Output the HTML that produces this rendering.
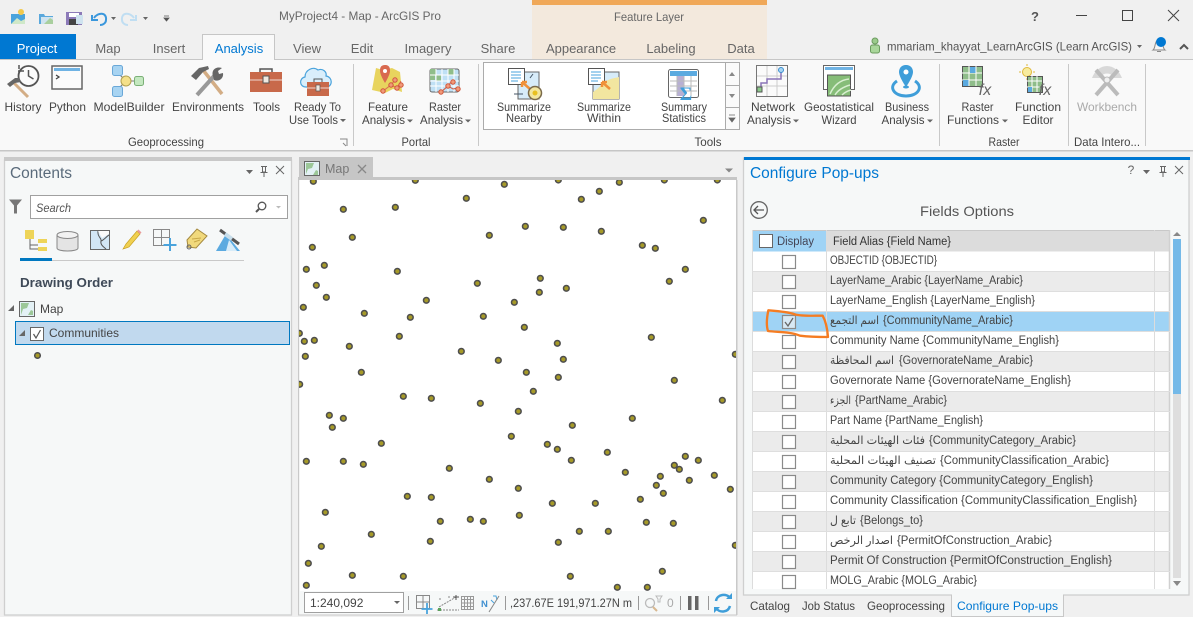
<!DOCTYPE html>
<html><head><meta charset="utf-8"><style>
html,body{margin:0;padding:0;background:#f0f0f0;width:1193px;height:617px;overflow:hidden}
svg{display:block;font-family:"Liberation Sans","DejaVu Sans",sans-serif}
</style></head><body>
<svg width="1193" height="617" viewBox="0 0 1193 617" xmlns="http://www.w3.org/2000/svg">
<defs><clipPath id="mc"><rect x="299" y="180" width="437" height="411"/></clipPath></defs>
<rect width="1193" height="617" fill="#f0f0f0"/>
<!-- contextual tab -->
<rect x="532" y="0" width="235" height="59" fill="#f3e9dd"/><rect x="532" y="0" width="235" height="5" fill="#f0a858"/>
<!-- ribbon -->
<rect x="0" y="59" width="1193" height="92" fill="#f9f9f9"/>
<rect x="0" y="59" width="1193" height="1" fill="#c6c6c6"/><rect x="0" y="150" width="1193" height="1.5" fill="#c6c6c6"/>
<rect x="0" y="34" width="76" height="25" fill="#0078d2"/>
<path d="M202.500 60V34.500H274.500V60" fill="#f9f9f9" stroke="#c6c6c6"/><rect x="203" y="58" width="71" height="3" fill="#f9f9f9"/>
<g fill="#c9c9c9"><rect x="353" y="64" width="1" height="82"/><rect x="478" y="64" width="1" height="82"/><rect x="939" y="64" width="1" height="82"/><rect x="1068" y="64" width="1" height="82"/><rect x="1145" y="64" width="1" height="82"/></g>
<!-- title -->
<g font-size="12" fill="#666">
<text x="279" y="20" textLength="162" lengthAdjust="spacingAndGlyphs">MyProject4 - Map - ArcGIS Pro</text>
<text x="614" y="21" textLength="70" lengthAdjust="spacingAndGlyphs">Feature Layer</text>
</g>
<g font-size="13" fill="#666" text-anchor="middle">
<text x="108" y="53">Map</text><text x="169" y="53">Insert</text><text x="307" y="53">View</text><text x="362" y="53">Edit</text><text x="428" y="53">Imagery</text><text x="498" y="53">Share</text><text x="581" y="53">Appearance</text><text x="671" y="53">Labeling</text><text x="741" y="53">Data</text>
<text x="37" y="53" fill="#fff">Project</text><text x="239" y="53" fill="#0078d2">Analysis</text>
</g>
<!-- ribbon labels -->
<g font-size="12" fill="#444" text-anchor="middle" lengthAdjust="spacingAndGlyphs">
<text x="23" y="111" textLength="37" lengthAdjust="spacingAndGlyphs">History</text><text x="67.500" y="111" textLength="37" lengthAdjust="spacingAndGlyphs">Python</text><text x="129" y="111" textLength="71" lengthAdjust="spacingAndGlyphs">ModelBuilder</text><text x="208" y="111" textLength="72" lengthAdjust="spacingAndGlyphs">Environments</text><text x="266.500" y="111" textLength="27" lengthAdjust="spacingAndGlyphs">Tools</text>
<text x="317.500" y="111" textLength="47" lengthAdjust="spacingAndGlyphs">Ready To</text><text x="313.500" y="124" textLength="49" lengthAdjust="spacingAndGlyphs">Use Tools</text>
<text x="388" y="111" textLength="40" lengthAdjust="spacingAndGlyphs">Feature</text><text x="383.500" y="124" textLength="43" lengthAdjust="spacingAndGlyphs">Analysis</text><text x="445" y="111" textLength="32" lengthAdjust="spacingAndGlyphs">Raster</text><text x="441.500" y="124" textLength="43" lengthAdjust="spacingAndGlyphs">Analysis</text>
<text x="773" y="111" textLength="44" lengthAdjust="spacingAndGlyphs">Network</text><text x="769" y="124" textLength="44" lengthAdjust="spacingAndGlyphs">Analysis</text><text x="839" y="111" textLength="70" lengthAdjust="spacingAndGlyphs">Geostatistical</text><text x="839" y="124" textLength="35" lengthAdjust="spacingAndGlyphs">Wizard</text><text x="907" y="111" textLength="44" lengthAdjust="spacingAndGlyphs">Business</text><text x="903" y="124" textLength="43" lengthAdjust="spacingAndGlyphs">Analysis</text>
<text x="977.500" y="111" textLength="32" lengthAdjust="spacingAndGlyphs">Raster</text><text x="973" y="124" textLength="52" lengthAdjust="spacingAndGlyphs">Functions</text><text x="1038" y="111" textLength="46" lengthAdjust="spacingAndGlyphs">Function</text><text x="1038" y="124" textLength="31" lengthAdjust="spacingAndGlyphs">Editor</text>
<text x="1107" y="111" fill="#aaa" textLength="60" lengthAdjust="spacingAndGlyphs">Workbench</text>
<text x="166" y="146" textLength="76" lengthAdjust="spacingAndGlyphs">Geoprocessing</text><text x="416" y="146" textLength="29" lengthAdjust="spacingAndGlyphs">Portal</text><text x="708" y="146" textLength="27" lengthAdjust="spacingAndGlyphs">Tools</text><text x="1004" y="146" textLength="31" lengthAdjust="spacingAndGlyphs">Raster</text><text x="1107" y="146" textLength="66" lengthAdjust="spacingAndGlyphs">Data Intero...</text>
</g>
<!-- gallery -->
<rect x="483.500" y="62.500" width="256" height="67" fill="#fff" stroke="#ababab"/>
<rect x="726" y="63" width="13" height="66" fill="#fafafa"/><path d="M725.500 62.500V129.500M725.500 85.500H739.500M725.500 107.500H739.500" stroke="#ababab" fill="none"/>
<path d="M729 76l3-4 3 4zM729 94l3 4 3-4z" fill="#888"/><path d="M729 115h6M729 118l3 4 3-4z" fill="#666" stroke="#666" stroke-width=".8"/>
<g font-size="12" fill="#444" text-anchor="middle">
<text x="524" y="111" textLength="54" lengthAdjust="spacingAndGlyphs">Summarize</text><text x="524" y="122" textLength="36" lengthAdjust="spacingAndGlyphs">Nearby</text><text x="604" y="111" textLength="54" lengthAdjust="spacingAndGlyphs">Summarize</text><text x="604" y="122" textLength="34" lengthAdjust="spacingAndGlyphs">Within</text><text x="684" y="111" textLength="46" lengthAdjust="spacingAndGlyphs">Summary</text><text x="684" y="122" textLength="44" lengthAdjust="spacingAndGlyphs">Statistics</text>
</g>
<!-- carets -->
<g fill="#666"><path d="M340 119h6l-3 3zM407 119.500h6l-3 3zM465 119.500h6l-3 3zM793 119.500h6l-3 3zM927 119.500h6l-3 3zM1002 119.500h6l-3 3zM1137 45h5l-2.500 3z"/></g>
<path d="M340 139h7v7M343 143l3 3" fill="none" stroke="#888"/>
<!-- QAT icons -->
<rect x="11" y="14" width="14" height="10" fill="#4aa3dc"/><path d="M11 24l6-6 4 3 4-2v5z" fill="#cfe8c8"/><circle cx="21" cy="12" r="3" fill="#f2c94c"/>
<path d="M39 14h5l1 2h8v8H39z" fill="#5aa8dc"/><rect x="41" y="17" width="12" height="7" fill="#cfe3ef"/><path d="M44 24l6-6 3 2v4z" fill="#a9cf9e"/>
<rect x="66" y="12" width="16" height="13" fill="#8c7ab8"/><rect x="69" y="13" width="10" height="4" fill="#fff"/><rect x="69" y="19" width="9" height="6" fill="#444"/><rect x="76" y="15" width="7" height="9" fill="#cfe3ef"/>
<path d="M94 18c4-6 13-6 12 2 0 3-3 5-6 5M92 15v5h6" fill="none" stroke="#3a97dc" stroke-width="2"/>
<path d="M134 18c-4-6-13-6-12 2 0 3 3 5 6 5M136 15v5h-6" fill="none" stroke="#c0def2" stroke-width="2"/>
<path d="M111 17h5l-2.500 3zM143 17h5l-2.500 3z" fill="#666"/>
<path d="M164 16h5M164 18h5l-2.500 3z" stroke="#555" fill="#555" stroke-width=".8"/>
<!-- window controls -->
<text x="1035" y="21" font-size="13" font-weight="bold" fill="#555" text-anchor="middle">?</text>
<path d="M1076 15.500h11M1122.500 10.500h10v10h-10zM1168 10l11 11M1179 10l-11 11" fill="none" stroke="#444"/>
<!-- account -->
<circle cx="875" cy="41" r="3" fill="#9bcb8c" stroke="#6b9b5e"/><rect x="870.500" y="45" width="9" height="8" rx="2" fill="#a9d69a" stroke="#6b9b5e"/>
<text x="887" y="50.500" font-size="12" fill="#555" textLength="245" lengthAdjust="spacingAndGlyphs">mmariam_khayyat_LearnArcGIS (Learn ArcGIS)</text>
<path d="M1153 50c3-2 1-10 6-10s3 8 6 10zM1157 51.500h4" fill="#f4f4f4" stroke="#888"/><circle cx="1161" cy="42" r="5" fill="#0078d2"/>
<path d="M1180 49l4-4 4 4" fill="none" stroke="#555" stroke-width="2"/>
<!-- History -->
<circle cx="28.500" cy="76" r="10" fill="#fbfbfb" stroke="#555" stroke-width="1.800"/><path d="M28.500 70v6l5 3M19 69v-4M18 71h6" fill="none" stroke="#555" stroke-width="1.500"/>
<path d="M14 83l14 14" stroke="#d3ad85" stroke-width="3"/><path d="M7 84l8-6h4l2 4-6 1-5 4z" fill="#666"/>
<!-- Python -->
<rect x="52" y="66" width="30" height="23" fill="#fbfbfb" stroke="#666" stroke-width="1.500"/><rect x="54" y="68" width="26" height="3" fill="#6fb3e4"/><path d="M56 75l3 2-3 2" stroke="#444" fill="none" stroke-width="1.300"/>
<!-- ModelBuilder -->
<path d="M117 72l9 9M117 90l9-9M131 81h5" stroke="#777" fill="none"/>
<rect x="112.500" y="65.500" width="10" height="10" rx="2" fill="#a8d4f2" stroke="#6aa8d8"/><rect x="112.500" y="86.500" width="10" height="10" rx="2" fill="#a8d4f2" stroke="#6aa8d8"/>
<circle cx="126" cy="81" r="5" fill="#f4e08a" stroke="#b0a050"/><rect x="134.500" y="76.500" width="9" height="9" rx="2" fill="#c4e8c0" stroke="#7bb077"/>
<!-- Environments -->
<path d="M203 70l19 24" stroke="#d3ad85" stroke-width="3.500"/><path d="M191 76l8-8 9-2 1 3-6 3-7 8z" fill="#666"/>
<path d="M197 95l18-20" stroke="#999" stroke-width="4"/><path d="M213 76c-2-6 3-10 9-8l-4 3 1 3 4-1c1 6-5 9-9 7z" fill="#666"/>
<!-- Tools -->
<rect x="250" y="72" width="32" height="20" fill="#c8694a"/><path d="M260 72v-3h12v3" fill="none" stroke="#555" stroke-width="1.500"/><path d="M250 80h32" stroke="#f0d8d0"/><rect x="263" y="76" width="6" height="7" fill="#f0e8e0" stroke="#555"/>
<!-- Ready -->
<path d="M306 87c-7 0-7-9-1-10 0-7 8-11 13-7 5-2 9 2 8 6 7 1 7 11 0 11z" fill="#d9eefb" stroke="#4aa3dc" stroke-width="1.200"/>
<rect x="307" y="82" width="22" height="14" fill="#c8694a"/><path d="M314 82v-3h8v3" fill="none" stroke="#555"/><path d="M307 88h22" stroke="#f0d8d0"/><rect x="316" y="85" width="4" height="6" fill="#f0e8e0" stroke="#555" stroke-width=".7"/>
<!-- Feature analysis -->
<path d="M372 90l4-22 7 2 9-2 8 4 2 20-9-3-8 4z" fill="#e8d45e"/><path d="M385 65c-5 0-5 4-5 6 0 4 5 12 5 12s5-8 5-12c0-2 0-6-5-6z" fill="#d96a50"/><circle cx="385" cy="71" r="2" fill="#fff"/>
<path d="M383 91l8-6 6 3 4-7M391 85l4-5" fill="none" stroke="#d96a50"/><g fill="#f09a7a" stroke="#d0553a"><circle cx="383" cy="91" r="2.200"/><circle cx="391" cy="85" r="2.200"/><circle cx="397" cy="88" r="2.200"/><circle cx="395" cy="80" r="2.200"/><circle cx="401" cy="85" r="2.200"/></g>
<!-- Raster analysis -->
<rect x="430" y="69" width="29" height="23" rx="2" fill="#bfe0f5" stroke="#666"/><path d="M430 69h6v6h-6zM436 75h5v6h-5zM448 69h6v6h-6zM430 75h5v5h-5z" fill="#8fbd8a"/><path d="M436 69v23M442 69v23M448 69v23M454 69v23M430 75h29M430 81h29M430 86h29" stroke="#fff" fill="none"/>
<path d="M441 92l7-6 5 3 5-1M448 86l4-5" fill="none" stroke="#d0553a"/><g fill="#f09a7a" stroke="#d0553a"><circle cx="441" cy="92" r="2.200"/><circle cx="448" cy="86" r="2.200"/><circle cx="453" cy="82" r="2.200"/><circle cx="458" cy="89" r="2.200"/></g>
<!-- Summarize nearby -->
<rect x="518" y="72" width="21" height="27" fill="#d7ecf9" stroke="#666"/><rect x="508.500" y="68.500" width="16" height="16" fill="#fff" stroke="#555"/><path d="M511 72h10M511 75h10M511 78h10M511 81h7" stroke="#4aa3dc"/>
<path d="M522 82l8 7M522 82h5M522 82v5" stroke="#f0913a" stroke-width="2.500" fill="none"/><circle cx="535" cy="93" r="6.500" fill="#f2e6a0" stroke="#7a6a4a" stroke-width="1.500"/><circle cx="535" cy="93" r="2.500" fill="#e8c020"/><path d="M514 94h9M530 78l3-4" stroke="#456"/>
<!-- Summarize within -->
<rect x="593" y="72" width="26" height="27" fill="#d7ecf9" stroke="#666"/><path d="M593 99v-7c5-3 9-8 13-11 6-3 10-3 13-4v22z" fill="#f2e6a0"/><rect x="588.500" y="68.500" width="16" height="16" fill="#fff" stroke="#555"/><path d="M591 72h10M591 75h10M591 78h10M591 81h7" stroke="#4aa3dc"/><path d="M602 82l8 7M602 82h5M602 82v5" stroke="#f0913a" stroke-width="2.500" fill="none"/>
<!-- Summary statistics -->
<rect x="668.500" y="69.500" width="30" height="28" rx="2" fill="#fff" stroke="#666"/><rect x="670" y="71" width="27" height="5" fill="#5baae0"/><rect x="677" y="76" width="7" height="20" fill="#b7afd4"/><path d="M677 76v20M684 76v20M691 76v20M670 81h27M670 86h27M670 91h27" stroke="#bbb" fill="none"/>
<text x="686" y="100" font-size="19" font-weight="bold" fill="#3f9ed9" text-anchor="middle" font-family="Liberation Serif">Σ</text>
<!-- Network -->
<rect x="756.500" y="65.500" width="31" height="31" fill="#fbfbfb" stroke="#777"/><path d="M767 66v30M777 66v30M757 76h30M757 86h30" stroke="#ccc"/><path d="M761 91v-8h6v-4h14v-9" fill="none" stroke="#8a74b8" stroke-width="1.500"/><rect x="757" y="87" width="5" height="5" fill="#8cc98a" stroke="#555"/><circle cx="781" cy="70" r="2.500" fill="#a8d4f2" stroke="#3a8fd0"/>
<!-- Geostat -->
<rect x="823.500" y="65.500" width="31" height="24" fill="#fff" stroke="#666"/><rect x="825" y="67" width="28" height="3" fill="#6fb3e4"/><rect x="827.500" y="75" width="23" height="21" fill="#86bd78" stroke="#555"/><path d="M830 94c4-9 10-14 19-15M835 95c3-5 8-8 15-10M842 95c2-2 5-4 9-5" fill="none" stroke="#d8efd0" stroke-width="1.500"/>
<!-- Business -->
<path d="M906 65c-6 0-7 5-7 7 0 5 7 15 7 15s7-10 7-15c0-2-1-7-7-7z" fill="#3f9ed9"/><circle cx="906" cy="72" r="2.500" fill="#fff"/><path d="M897 81c-9 6-3 15 9 15s18-9 9-15" fill="none" stroke="#3f9ed9" stroke-width="3"/><ellipse cx="906" cy="87" rx="3" ry="1.500" fill="#3f9ed9"/>
<!-- Raster functions -->
<rect x="962.500" y="66.500" width="20" height="20" fill="#8fbd8a" stroke="#555"/><path d="M969 66v20M976 66v20M962 73h20M962 80h20" stroke="#fff"/><rect x="970" y="67" width="5.500" height="6" fill="#5baae0"/><rect x="963" y="80" width="5.500" height="6" fill="#5baae0"/>
<text x="985" y="95" font-size="16" fill="#666" font-style="italic" text-anchor="middle">fx</text>
<!-- Function editor -->
<circle cx="1027" cy="72" r="4.500" fill="#f8ec9e" stroke="#e0b93c"/><path d="M1021 72h-2M1035 72h-2M1027 66v-2M1027 80v-2" stroke="#e0b93c"/>
<rect x="1027.500" y="76.500" width="15" height="16" fill="#8fbd8a" stroke="#555"/><path d="M1032 76v16M1037 76v16M1027 81h15M1027 87h15" stroke="#fff"/><rect x="1028" y="87" width="4" height="5" fill="#5baae0"/>
<text x="1045" y="95" font-size="16" fill="#666" font-style="italic" text-anchor="middle">fx</text>
<!-- Workbench -->
<path d="M1092 78c6-16 24-16 30 0l-8 0c-3-6-11-6-14 0z" fill="#d8d8d8"/><path d="M1096 70l22 25M1118 70l-22 25" stroke="#bbb" stroke-width="4"/><circle cx="1107" cy="80" r="3" fill="#f0f0f0" stroke="#bbb"/>
<!-- LEFT PANE -->
<rect x="4.500" y="160" width="287" height="455" fill="#f6f8f8" stroke="#cfcfcf" stroke-width="1.300"/><rect x="4" y="157" width="288" height="4" fill="#c9c9c9"/>
<text x="10" y="178" font-size="15.500" fill="#5a6b7b" textLength="62" lengthAdjust="spacingAndGlyphs">Contents</text>
<path d="M246 170h7l-3.500 4z" fill="#666"/><path d="M261 166.500h6M262.500 167v5h3v-5M260.500 172.500h7M264 173v4M276 166l8 8M284 166l-8 8" stroke="#666" fill="none"/>
<path d="M9 199.500h13l-5 6v8h-3v-8z" fill="#777"/>
<rect x="30.500" y="195.500" width="257" height="23" fill="#fff" stroke="#a0a0a0"/>
<text x="36" y="212" font-size="12" font-style="italic" fill="#555" textLength="35" lengthAdjust="spacingAndGlyphs">Search</text>
<circle cx="262" cy="206" r="3.800" fill="none" stroke="#555" stroke-width="1.300"/><path d="M259 209l-3 3" stroke="#555" stroke-width="2"/><path d="M276 206h5l-2.500 2.500z" fill="#bbb"/>
<!-- contents toolbar -->
<rect x="25" y="230" width="9" height="6" fill="#eed458"/><rect x="25" y="236" width="9" height="3" fill="#eed458"/><rect x="38" y="239" width="9" height="4" fill="#eed458"/><rect x="38" y="247" width="9" height="4" fill="#eed458"/><path d="M30 239v10h8M30 245h8" stroke="#666" fill="none"/>
<path d="M57 235v13c0 4 21 4 21 0v-13" fill="#e4e4e4" stroke="#888"/><ellipse cx="67.500" cy="235" rx="10.500" ry="3.500" fill="#f2f2f2" stroke="#888"/>
<rect x="90.500" y="230.500" width="19" height="19" fill="#d2e6f5" stroke="#666"/><path d="M98 231c-1 6 4 7 3 10-1 4 3 6 5 8M101 241c3-1 6-5 8-6" fill="none" stroke="#555"/><path d="M98 231h11v3l-7 4z" fill="#fafafa"/>
<path d="M123 249l3-5 11-13 3 3-11 13z" fill="#f0d050" stroke="#c8a020" stroke-width=".7"/><path d="M137 231l1.500-1.500 3 3-1.500 1.500z" fill="#e89a9a"/>
<path d="M153.500 229.500h16v16h-16zM161.500 229.500v16M153.500 237.500h16" fill="none" stroke="#888"/><path d="M170 238v13M163.500 245h13" stroke="#4aa3dc" stroke-width="2"/>
<path d="M187 240l10-11 10 7-11 12-8-1z" fill="#f1d97c" stroke="#a58a40"/><path d="M192 239l9-1M194 242l6-2" stroke="#c8a848"/><circle cx="189" cy="247" r="2" fill="none" stroke="#666"/>
<path d="M216 251l10-17 14 17z" fill="#5baae0"/><path d="M226 251l3-11 8 11z" fill="#d7ecf9"/><path d="M220 230l19 14" stroke="#555" stroke-width="3"/><path d="M225 234l7 5" stroke="#c7ddea" stroke-width="4"/>
<rect x="20" y="260" width="224" height="1" fill="#c9c9c9"/><rect x="20" y="258" width="32" height="3" fill="#0078c0"/>
<text x="20" y="287" font-size="13" font-weight="bold" fill="#3f4a58" textLength="93" lengthAdjust="spacingAndGlyphs">Drawing Order</text>
<path d="M8 311l6-6v6z" fill="#666"/><rect x="19.500" y="301.500" width="15" height="15" fill="#e3f1f5" stroke="#666"/><path d="M21 303h8l-2 5-4 1-2 6z" fill="#9cc798"/><path d="M28 315l3-5 2 1v4z" fill="#9cc798"/>
<text x="40" y="313" font-size="12" fill="#444">Map</text>
<rect x="15.500" y="321.500" width="274" height="23" fill="#c1d9ee" stroke="#0078c0"/>
<path d="M19 336l6-6v6z" fill="#666"/><rect x="30.500" y="327.500" width="13" height="13" fill="#fff" stroke="#666"/><path d="M33.500 334l2.500 4 4.500-8" stroke="#555" fill="none" stroke-width="1.200"/>
<text x="49" y="337" font-size="12" fill="#444">Communities</text>
<circle cx="37.500" cy="355.500" r="2.800" fill="#a69a28" stroke="#4e4e4e" stroke-width="1.500"/>
<!-- MAP -->
<rect x="299" y="157" width="74" height="20" fill="#c6c6c6"/><rect x="298" y="177" width="439" height="3" fill="#c6c6c6"/>
<rect x="304.500" y="161.500" width="15" height="14" fill="#e3f1f5" stroke="#666"/><path d="M306 163h8l-2 5-4 1-2 5z" fill="#9cc798"/><path d="M313 175l3-5 2 1v4z" fill="#9cc798"/>
<text x="325" y="173" font-size="12.500" fill="#777">Map</text><path d="M358 165l8 8M366 165l-8 8" stroke="#888" stroke-width="1.300"/>
<path d="M725 168.500h8l-4 4z" fill="#888"/>
<rect x="299" y="180" width="437" height="411" fill="#fff"/>
<rect x="298" y="180" width="1.200" height="435" fill="#c9c9c9"/><rect x="736" y="180" width="1.500" height="435" fill="#c9c9c9"/><rect x="298" y="614.500" width="439" height="1" fill="#c9c9c9"/>
<g clip-path="url(#mc)"><g fill="#a69a28" stroke="#4e4e4e" stroke-width="4.500">
<g transform="translate(295 155) scale(.33333)">
<circle cx="55" cy="79" r="8.500"/><circle cx="361" cy="76" r="8.500"/><circle cx="628" cy="88" r="8.500"/><circle cx="790" cy="75" r="8.500"/><circle cx="973" cy="82" r="8.500"/><circle cx="1108" cy="75" r="8.500"/><circle cx="1267" cy="75" r="8.500"/><circle cx="514" cy="130" r="8.500"/><circle cx="913" cy="109" r="8.500"/><circle cx="859" cy="133" r="8.500"/><circle cx="145" cy="163" r="8.500"/><circle cx="301" cy="157" r="8.500"/><circle cx="1225" cy="196" r="8.500"/><circle cx="691" cy="214" r="8.500"/><circle cx="805" cy="217" r="8.500"/><circle cx="919" cy="229" r="8.500"/><circle cx="583" cy="241" r="8.500"/><circle cx="172" cy="247" r="8.500"/><circle cx="52" cy="277" r="8.500"/><circle cx="1042" cy="271" r="8.500"/><circle cx="1081" cy="280" r="8.500"/><circle cx="88" cy="331" r="8.500"/><circle cx="34" cy="343" r="8.500"/><circle cx="307" cy="349" r="8.500"/><circle cx="1171" cy="343" r="8.500"/><circle cx="736" cy="370" r="8.500"/><circle cx="547" cy="385" r="8.500"/><circle cx="64" cy="391" r="8.500"/><circle cx="1123" cy="379" r="8.500"/><circle cx="814" cy="400" r="8.500"/><circle cx="733" cy="412" r="8.500"/><circle cx="94" cy="427" r="8.500"/><circle cx="394" cy="436" r="8.500"/><circle cx="658" cy="442" r="8.500"/><circle cx="25" cy="457" r="8.500"/><circle cx="208" cy="475" r="8.500"/><circle cx="346" cy="487" r="8.500"/><circle cx="565" cy="484" r="8.500"/><circle cx="688" cy="517" r="8.500"/><circle cx="13" cy="535" r="8.500"/><circle cx="28" cy="559" r="8.500"/><circle cx="58" cy="556" r="8.500"/><circle cx="313" cy="544" r="8.500"/><circle cx="163" cy="574" r="8.500"/><circle cx="787" cy="565" r="8.500"/><circle cx="1069" cy="547" r="8.500"/><circle cx="31" cy="604" r="8.500"/><circle cx="499" cy="589" r="8.500"/><circle cx="610" cy="616" r="8.500"/><circle cx="805" cy="613" r="8.500"/><circle cx="1321" cy="598" r="8.500"/>
</g>
<g transform="translate(295 365) scale(.33333)">
<circle cx="199" cy="22" r="8.500"/><circle cx="694" cy="22" r="8.500"/><circle cx="790" cy="37" r="8.500"/><circle cx="1138" cy="46" r="8.500"/><circle cx="14" cy="58" r="8.500"/><circle cx="325" cy="94" r="8.500"/><circle cx="409" cy="100" r="8.500"/><circle cx="715" cy="79" r="8.500"/><circle cx="556" cy="115" r="8.500"/><circle cx="1282" cy="106" r="8.500"/><circle cx="670" cy="139" r="8.500"/><circle cx="103" cy="151" r="8.500"/><circle cx="145" cy="160" r="8.500"/><circle cx="1012" cy="160" r="8.500"/><circle cx="112" cy="187" r="8.500"/><circle cx="832" cy="181" r="8.500"/><circle cx="649" cy="214" r="8.500"/><circle cx="259" cy="235" r="8.500"/><circle cx="757" cy="238" r="8.500"/><circle cx="787" cy="253" r="8.500"/><circle cx="937" cy="262" r="8.500"/><circle cx="34" cy="289" r="8.500"/><circle cx="145" cy="289" r="8.500"/><circle cx="205" cy="298" r="8.500"/><circle cx="829" cy="286" r="8.500"/><circle cx="1171" cy="274" r="8.500"/><circle cx="1210" cy="286" r="8.500"/><circle cx="1138" cy="301" r="8.500"/><circle cx="1153" cy="313" r="8.500"/><circle cx="463" cy="310" r="8.500"/><circle cx="991" cy="322" r="8.500"/><circle cx="1096" cy="334" r="8.500"/><circle cx="1258" cy="331" r="8.500"/><circle cx="583" cy="343" r="8.500"/><circle cx="1183" cy="346" r="8.500"/><circle cx="670" cy="370" r="8.500"/><circle cx="1084" cy="361" r="8.500"/><circle cx="1105" cy="385" r="8.500"/><circle cx="1306" cy="373" r="8.500"/><circle cx="337" cy="394" r="8.500"/><circle cx="409" cy="397" r="8.500"/><circle cx="1036" cy="403" r="8.500"/><circle cx="772" cy="415" r="8.500"/><circle cx="901" cy="415" r="8.500"/><circle cx="91" cy="442" r="8.500"/><circle cx="436" cy="469" r="8.500"/><circle cx="526" cy="463" r="8.500"/><circle cx="565" cy="469" r="8.500"/><circle cx="673" cy="451" r="8.500"/><circle cx="1054" cy="472" r="8.500"/><circle cx="1135" cy="475" r="8.500"/><circle cx="229" cy="508" r="8.500"/><circle cx="853" cy="499" r="8.500"/><circle cx="940" cy="499" r="8.500"/><circle cx="406" cy="529" r="8.500"/><circle cx="790" cy="532" r="8.500"/><circle cx="79" cy="544" r="8.500"/><circle cx="1321" cy="541" r="8.500"/><circle cx="40" cy="595" r="8.500"/><circle cx="1102" cy="619" r="8.500"/><circle cx="172" cy="631" r="8.500"/><circle cx="325" cy="634" r="8.500"/><circle cx="826" cy="634" r="8.500"/><circle cx="34" cy="661" r="8.500"/><circle cx="967" cy="667" r="8.500"/><circle cx="1057" cy="667" r="8.500"/>
</g></g></g>
<!-- status bar -->
<rect x="299.200" y="591" width="436.800" height="23.500" fill="#f6f8f8"/>
<rect x="304.500" y="592.500" width="99" height="20" fill="#fff" stroke="#a0a0a0"/>
<text x="310" y="607" font-size="12" fill="#444">1:240,092</text><path d="M394 601h6l-3 3z" fill="#666"/>
<g stroke="#999"><path d="M408.500 596v14M505.500 596v14M638.500 596v14M680.500 596v14M708.500 596v14"/></g>
<path d="M416.500 595.500h13v13h-13zM423 595.500v13M416.500 602h13" fill="none" stroke="#888"/><path d="M427 603v11M421.500 609h11" stroke="#4aa3dc" stroke-width="1.800"/>
<path d="M439 607l17-10M439 599h3M448 597h3M437 610h22" stroke="#888" fill="none" stroke-dasharray="2 1"/><rect x="438" y="608" width="3" height="3" fill="#5aa35a"/><path d="M453 597h6M456 595v5" stroke="#555"/>
<path d="M461.500 596.500h12v13h-12zM464.500 596.500v13M467.500 596.500v13M470.500 596.500v13M461.500 599.500h12M461.500 603h12M461.500 606.500h12" fill="none" stroke="#999"/>
<text x="481" y="607" font-size="9.500" font-weight="bold" fill="#3f8fd0">N</text><path d="M491 600l3 3M493 596h3l1 4" fill="none" stroke="#4aa3dc"/><path d="M489 612l10-16" stroke="#888"/>
<text x="510" y="607" font-size="12" fill="#444" textLength="122" lengthAdjust="spacingAndGlyphs">,237.67E 191,971.27N m</text>
<circle cx="650" cy="603" r="4.500" fill="none" stroke="#bbb" stroke-width="1.300"/><path d="M653 607l4 4" stroke="#d8b890" stroke-width="2"/><path d="M656 596h6l-2 3v3h-2v-3z" fill="none" stroke="#bbb"/>
<text x="667" y="607" font-size="12" fill="#aaa">0</text>
<rect x="688" y="596" width="3.500" height="14" fill="#666"/><rect x="695" y="596" width="3.500" height="14" fill="#666"/>
<path d="M716 601c1-7 11-8 14-3M730 606c-2 7-11 7-14 2" fill="none" stroke="#3f9ed9" stroke-width="2.500"/><path d="M726 599h6v-6zM720 607h-6v6z" fill="#3f9ed9"/>
<!-- RIGHT PANE -->
<rect x="743.500" y="158" width="445.500" height="437" fill="#f6f8f8" stroke="#cfcfcf" stroke-width="1.300"/><rect x="744" y="157" width="446" height="3" fill="#0078d2"/>
<text x="750" y="178" font-size="15.500" fill="#0078d2" textLength="129" lengthAdjust="spacingAndGlyphs">Configure Pop-ups</text>
<text x="1131" y="174" font-size="12" fill="#666" text-anchor="middle">?</text><path d="M1143 170h7l-3.500 4z" fill="#666"/>
<path d="M1160 166.500h6M1161.500 167v5h3v-5M1159.500 172.500h7M1163 173v4M1175 166l8 8M1183 166l-8 8" stroke="#666" fill="none"/>
<circle cx="759" cy="210" r="8.300" fill="none" stroke="#666" stroke-width="1.300"/><path d="M764 210h-9M758 206l-4 4 4 4" fill="none" stroke="#555" stroke-width="1.300"/>
<text x="967" y="216" font-size="14" fill="#555" text-anchor="middle" textLength="94" lengthAdjust="spacingAndGlyphs">Fields Options</text>
<!-- table -->
<rect x="752" y="230" width="418" height="359" fill="#fff"/>
<rect x="752" y="230" width="418" height="21.500" fill="#dcdcdc"/><rect x="752" y="230" width="74" height="21.500" fill="#9fd3f5"/>
<path d="M752 230.500H1170" stroke="#c8c8c8"/>
<g fill="#ebebeb"><rect x="753" y="272" width="416" height="19"/><rect x="753" y="352" width="416" height="19"/><rect x="753" y="392" width="416" height="19"/><rect x="753" y="432" width="416" height="19"/><rect x="753" y="472" width="416" height="19"/><rect x="753" y="512" width="416" height="19"/><rect x="753" y="552" width="416" height="19"/></g>
<rect x="753" y="312" width="416" height="19" fill="#9fd3f5"/>
<path d="M826.500 230V589M1154.500 230V589M752.500 230V589" stroke="#dcdcdc"/><path d="M1169.500 230V589" stroke="#d0d0d0" stroke-width="1.500"/>
<g stroke="#dedede"><path d="M752 271.500H1170M752 291.500H1170M752 311.500H1170M752 331.500H1170M752 351.500H1170M752 371.500H1170M752 391.500H1170M752 411.500H1170M752 431.500H1170M752 451.500H1170M752 471.500H1170M752 491.500H1170M752 511.500H1170M752 531.500H1170M752 551.500H1170M752 571.500H1170"/></g>
<rect x="759.500" y="234.500" width="13" height="13" fill="#fff" stroke="#666"/>
<text x="777" y="245" font-size="11.500" fill="#445" textLength="37" lengthAdjust="spacingAndGlyphs">Display</text>
<text x="833" y="245" font-size="11.500" fill="#333" textLength="118" lengthAdjust="spacingAndGlyphs">Field Alias {Field Name}</text>
<g fill="#fff" stroke="#8a8a8a" stroke-width="1.200"><rect x="782.500" y="255.500" width="13" height="13"/><rect x="782.500" y="275.500" width="13" height="13"/><rect x="782.500" y="295.500" width="13" height="13"/><rect x="782.500" y="315.500" width="13" height="13" fill="#d8e9f5"/><rect x="782.500" y="335.500" width="13" height="13"/><rect x="782.500" y="355.500" width="13" height="13"/><rect x="782.500" y="375.500" width="13" height="13"/><rect x="782.500" y="395.500" width="13" height="13"/><rect x="782.500" y="415.500" width="13" height="13"/><rect x="782.500" y="435.500" width="13" height="13"/><rect x="782.500" y="455.500" width="13" height="13"/><rect x="782.500" y="475.500" width="13" height="13"/><rect x="782.500" y="495.500" width="13" height="13"/><rect x="782.500" y="515.500" width="13" height="13"/><rect x="782.500" y="535.500" width="13" height="13"/><rect x="782.500" y="555.500" width="13" height="13"/><rect x="782.500" y="575.500" width="13" height="13"/></g>
<path d="M785 322l3 4 5-8" fill="none" stroke="#666" stroke-width="1.300"/>
<g font-size="11.500" fill="#444">
<text x="830" y="264" textLength="107" lengthAdjust="spacingAndGlyphs">OBJECTID {OBJECTID}</text>
<text x="830" y="284" textLength="193" lengthAdjust="spacingAndGlyphs">LayerName_Arabic {LayerName_Arabic}</text>
<text x="830" y="304" textLength="205" lengthAdjust="spacingAndGlyphs">LayerName_English {LayerName_English}</text>
<text x="830" y="324" textLength="49" lengthAdjust="spacingAndGlyphs">اسم التجمع</text><text x="883" y="324" textLength="130" lengthAdjust="spacingAndGlyphs">{CommunityName_Arabic}</text>
<text x="830" y="344" textLength="229" lengthAdjust="spacingAndGlyphs">Community Name {CommunityName_English}</text>
<text x="830" y="364" textLength="64" lengthAdjust="spacingAndGlyphs">اسم المحافظة</text><text x="899" y="364" textLength="134" lengthAdjust="spacingAndGlyphs">{GovernorateName_Arabic}</text>
<text x="830" y="384" textLength="241" lengthAdjust="spacingAndGlyphs">Governorate Name {GovernorateName_English}</text>
<text x="830" y="404" textLength="21" lengthAdjust="spacingAndGlyphs">الجزء</text><text x="855" y="404" textLength="92" lengthAdjust="spacingAndGlyphs">{PartName_Arabic}</text>
<text x="830" y="424" textLength="153" lengthAdjust="spacingAndGlyphs">Part Name {PartName_English}</text>
<text x="830" y="444" textLength="95" lengthAdjust="spacingAndGlyphs">فئات الهيئات المحلية</text><text x="929" y="444" textLength="147" lengthAdjust="spacingAndGlyphs">{CommunityCategory_Arabic}</text>
<text x="830" y="464" textLength="106" lengthAdjust="spacingAndGlyphs">تصنيف الهيئات المحلية</text><text x="940" y="464" textLength="169" lengthAdjust="spacingAndGlyphs">{CommunityClassification_Arabic}</text>
<text x="830" y="484" textLength="263" lengthAdjust="spacingAndGlyphs">Community Category {CommunityCategory_English}</text>
<text x="830" y="504" textLength="307" lengthAdjust="spacingAndGlyphs">Community Classification {CommunityClassification_English}</text>
<text x="830" y="524" textLength="26" lengthAdjust="spacingAndGlyphs">تابع ل</text><text x="860" y="524" textLength="63" lengthAdjust="spacingAndGlyphs">{Belongs_to}</text>
<text x="830" y="544" textLength="63" lengthAdjust="spacingAndGlyphs">اصدار الرخص</text><text x="897" y="544" textLength="155" lengthAdjust="spacingAndGlyphs">{PermitOfConstruction_Arabic}</text>
<text x="830" y="564" textLength="282" lengthAdjust="spacingAndGlyphs">Permit Of Construction {PermitOfConstruction_English}</text>
<text x="830" y="584" textLength="147" lengthAdjust="spacingAndGlyphs">MOLG_Arabic {MOLG_Arabic}</text>
</g>
<!-- scrollbar -->
<rect x="1173" y="239" width="8" height="339" fill="#dedede"/><rect x="1173" y="239" width="8" height="155" fill="#74b9e8"/>
<path d="M1173 236l4-4 4 4zM1173 581l4 5 4-5z" fill="#888"/>
<!-- annotation -->
<path transform="translate(740 155) scale(.33333)" d="M85 466C80 490 78 510 84 528C115 532 150 530 180 542C205 545 235 546 264 546C262 520 258 500 248 482C215 482 185 484 165 478C140 470 110 468 85 466Z" fill="none" stroke="#f57c22" stroke-width="7" stroke-linejoin="round"/>
<!-- bottom tabs -->
<path d="M951.500 595V616.500H1063.500V595" fill="#f6f8f8" stroke="#c8c8c8"/><rect x="952" y="594" width="111" height="3" fill="#f6f8f8"/>
<g font-size="12" fill="#444"><text x="750" y="610" textLength="40" lengthAdjust="spacingAndGlyphs">Catalog</text><text x="802" y="610" textLength="53" lengthAdjust="spacingAndGlyphs">Job Status</text><text x="867" y="610" textLength="78" lengthAdjust="spacingAndGlyphs">Geoprocessing</text><text x="957" y="610" fill="#0078d2" textLength="101" lengthAdjust="spacingAndGlyphs">Configure Pop-ups</text></g>
</svg>
</body></html>
